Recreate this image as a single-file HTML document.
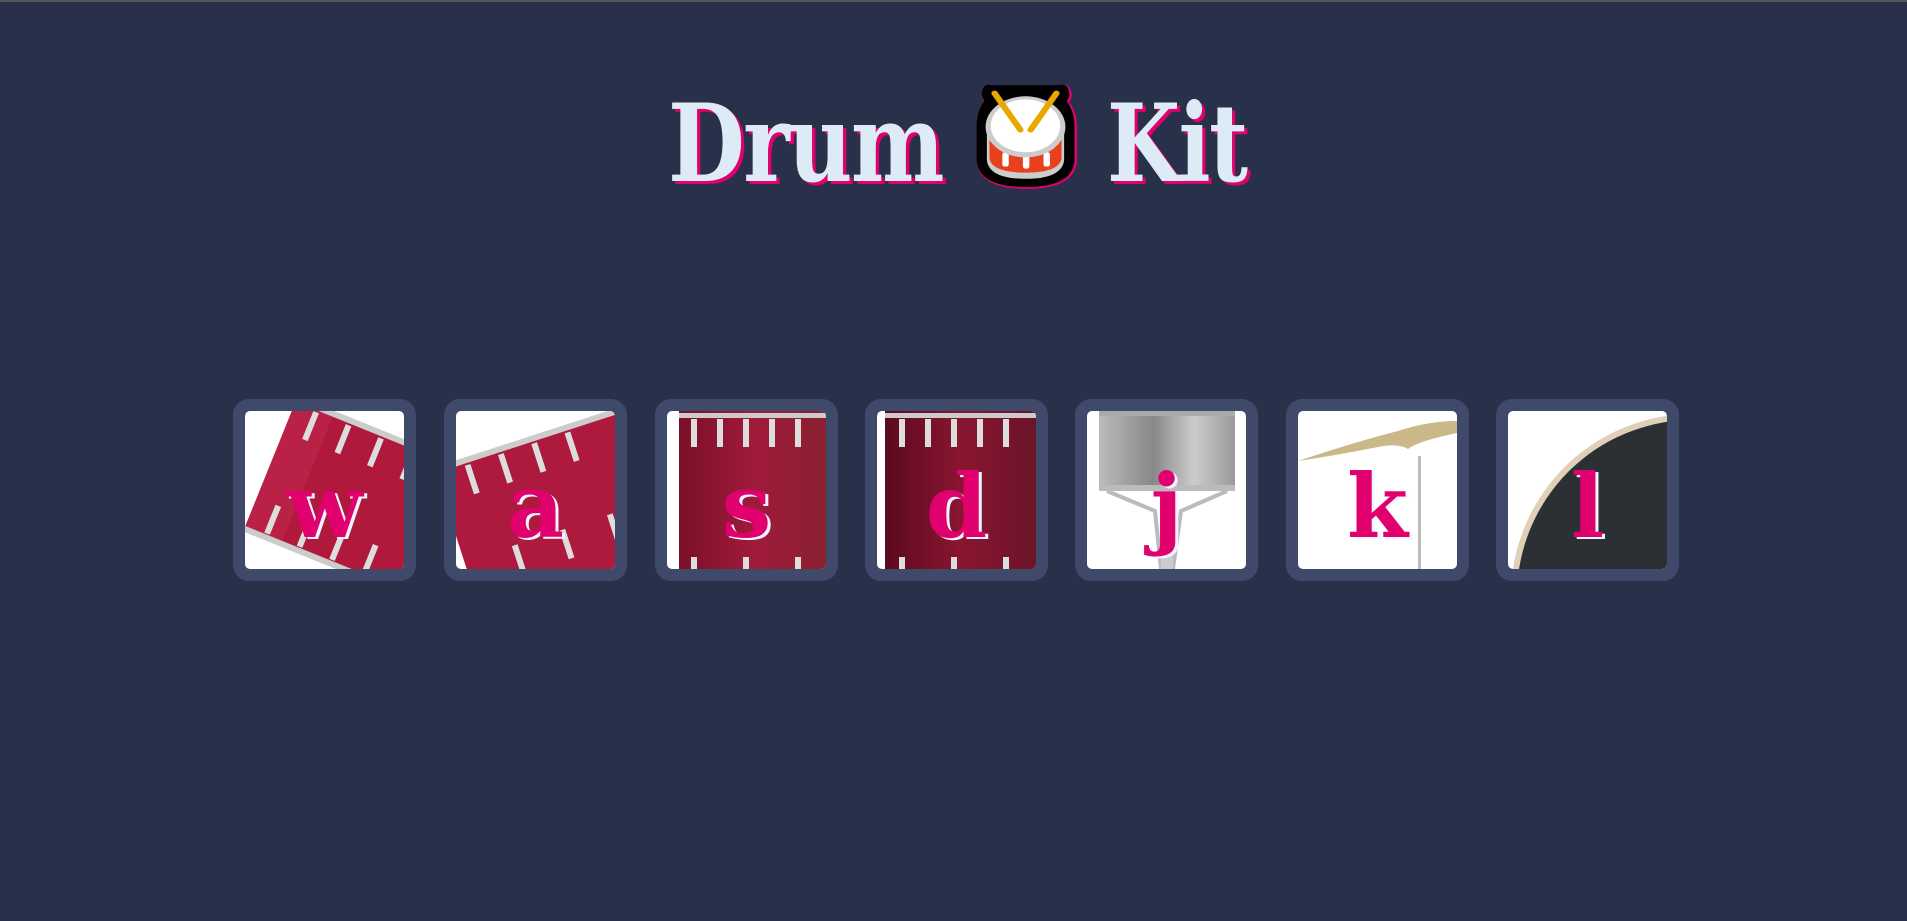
<!DOCTYPE html>
<html><head><meta charset="utf-8"><style>
html,body{margin:0;padding:0;width:1907px;height:919px;background:#293049;overflow:hidden;border-top:1px solid #555}
.t{position:absolute;top:84px;font-family:"DejaVu Serif",serif;font-weight:bold;font-size:108px;color:#dcebf5;text-shadow:4px 3px 0 #e0006e;line-height:120px;white-space:nowrap;transform-origin:left top}
.b{position:absolute;top:399px;width:183px;height:182px;background:#3f4a6b;border-radius:16px}
.i{position:absolute;left:12px;top:12px;width:159px;height:158px;background:#fff;border-radius:5px;overflow:hidden}
.i svg{position:absolute;left:0;top:0}
.l{position:absolute;left:0;right:0;top:40px;text-align:center;font-family:"DejaVu Serif",serif;font-weight:bold;font-size:88px;line-height:110px;color:#e0006e;text-shadow:3px 2px 0 #f0f4ff}
</style></head><body>
<div class="t" style="left:668px;letter-spacing:-2px;transform:scaleX(0.82)">Drum</div>
<svg style="position:absolute;left:974px;top:81px" width="103" height="110" viewBox="0 0 80 108" preserveAspectRatio="none">
<path d="M14 4 Q6 2 6 14 L8 20 Q2 30 2 44 L2 78 Q4 104 40 104 Q76 104 78 78 L78 44 Q78 30 72 20 L74 14 Q74 2 66 4 Z" fill="#000" stroke="#e0006e" stroke-width="2" transform="translate(1,1)"/>
<path d="M14 4 Q6 2 6 14 L8 20 Q2 30 2 44 L2 78 Q4 104 40 104 Q76 104 78 78 L78 44 Q78 30 72 20 L74 14 Q74 2 66 4 Z" fill="#000"/>
<path d="M10 50 L10 78 Q12 96 40 96 Q68 96 70 78 L70 50 Z" fill="#ccc"/>
<path d="M12 52 L12 76 Q14 90 40 90 Q66 90 68 76 L68 52 Z" fill="#e8401c"/>
<rect x="22" y="70" width="5" height="14" rx="2" fill="#fff"/><rect x="38" y="72" width="5" height="14" rx="2" fill="#fff"/><rect x="54" y="70" width="5" height="14" rx="2" fill="#fff"/>
<ellipse cx="40" cy="45" rx="31" ry="30" fill="#ccc"/><ellipse cx="40" cy="44" rx="27" ry="26" fill="#fff"/>
<path d="M16 12 L36 48 M64 12 L44 48" stroke="#e8a800" stroke-width="5" stroke-linecap="round"/>
</svg>
<div class="t" style="left:1107px;letter-spacing:-2px;transform:scaleX(0.78)">Kit</div>

<div class="b" style="left:233px"><div class="i">
<svg width="159" height="158"><g transform="rotate(22 90 80)"><rect x="20" y="10" width="190" height="140" fill="#b0183c"/><rect x="20" y="10" width="40" height="140" fill="#c02a4c" opacity=".6"/><rect x="20" y="6" width="190" height="6" fill="#ccc"/><rect x="20" y="146" width="190" height="6" fill="#ccc"/>
<g fill="#ddd"><rect x="40" y="14" width="6" height="30"/><rect x="75" y="14" width="6" height="30"/><rect x="110" y="14" width="6" height="30"/><rect x="145" y="14" width="6" height="30"/><rect x="40" y="115" width="6" height="30"/><rect x="75" y="115" width="6" height="30"/><rect x="110" y="115" width="6" height="30"/><rect x="145" y="115" width="6" height="30"/></g></g></svg>
<div class="l">w</div></div></div>

<div class="b" style="left:444px"><div class="i">
<svg width="159" height="158"><g transform="rotate(-18 80 80)"><rect x="-10" y="30" width="200" height="150" fill="#ad1a3e"/><rect x="-10" y="26" width="200" height="6" fill="#ccc"/>
<g fill="#ddd"><rect x="20" y="34" width="6" height="30"/><rect x="55" y="34" width="6" height="30"/><rect x="90" y="34" width="6" height="30"/><rect x="125" y="34" width="6" height="30"/><rect x="40" y="125" width="6" height="30"/><rect x="90" y="125" width="6" height="30"/><rect x="140" y="125" width="6" height="30"/></g></g></svg>
<div class="l">a</div></div></div>

<div class="b" style="left:655px"><div class="i">
<svg width="159" height="158"><defs><linearGradient id="g1"><stop offset="0" stop-color="#7a1028"/><stop offset=".5" stop-color="#a01a3a"/><stop offset="1" stop-color="#8a2030"/></linearGradient></defs><rect x="12" y="0" width="147" height="158" fill="url(#g1)"/><rect x="12" y="2" width="147" height="5" fill="#ccc"/>
<g fill="#ddd"><rect x="24" y="8" width="6" height="28"/><rect x="50" y="8" width="6" height="28"/><rect x="76" y="8" width="6" height="28"/><rect x="102" y="8" width="6" height="28"/><rect x="128" y="8" width="6" height="28"/><rect x="24" y="146" width="6" height="12"/><rect x="76" y="146" width="6" height="12"/><rect x="128" y="146" width="6" height="12"/></g></svg>
<div class="l">s</div></div></div>

<div class="b" style="left:865px"><div class="i">
<svg width="159" height="158"><defs><linearGradient id="g2"><stop offset="0" stop-color="#5a0a1e"/><stop offset=".5" stop-color="#8a1530"/><stop offset="1" stop-color="#6a1428"/></linearGradient></defs><rect x="8" y="0" width="151" height="158" fill="url(#g2)"/><rect x="8" y="2" width="151" height="5" fill="#ccc"/>
<g fill="#ddd"><rect x="22" y="8" width="6" height="28"/><rect x="48" y="8" width="6" height="28"/><rect x="74" y="8" width="6" height="28"/><rect x="100" y="8" width="6" height="28"/><rect x="126" y="8" width="6" height="28"/><rect x="22" y="146" width="6" height="12"/><rect x="74" y="146" width="6" height="12"/><rect x="126" y="146" width="6" height="12"/></g></svg>
<div class="l">d</div></div></div>

<div class="b" style="left:1075px"><div class="i">
<svg width="159" height="158"><defs><linearGradient id="g3"><stop offset="0" stop-color="#bbb"/><stop offset=".4" stop-color="#888"/><stop offset=".7" stop-color="#ccc"/><stop offset="1" stop-color="#999"/></linearGradient></defs>
<path d="M20 80 L68 100 L74 158 M140 80 L94 100 L86 158" stroke="#bbb" stroke-width="4" fill="none"/><rect x="74" y="90" width="12" height="68" fill="#ccc"/>
<rect x="12" y="2" width="136" height="76" fill="url(#g3)"/><rect x="12" y="0" width="136" height="5" fill="#aaa"/><rect x="12" y="74" width="136" height="6" fill="#bbb"/></svg>
<div class="l">j</div></div></div>

<div class="b" style="left:1286px"><div class="i">
<svg width="159" height="158"><rect x="120" y="45" width="3" height="113" fill="#bbb"/><path d="M0 50 Q60 30 100 20 Q130 10 159 10 L159 22 Q120 30 110 38 Q100 32 80 36 Q40 44 0 50 Z" fill="#cbb888"/></svg>
<div class="l">k</div></div></div>

<div class="b" style="left:1496px"><div class="i">
<svg width="159" height="158"><circle cx="185" cy="185" r="182" fill="#e0d0b8"/><circle cx="185" cy="185" r="176" fill="#2c2f33"/></svg>
<div class="l">l</div></div></div>
</body></html>
